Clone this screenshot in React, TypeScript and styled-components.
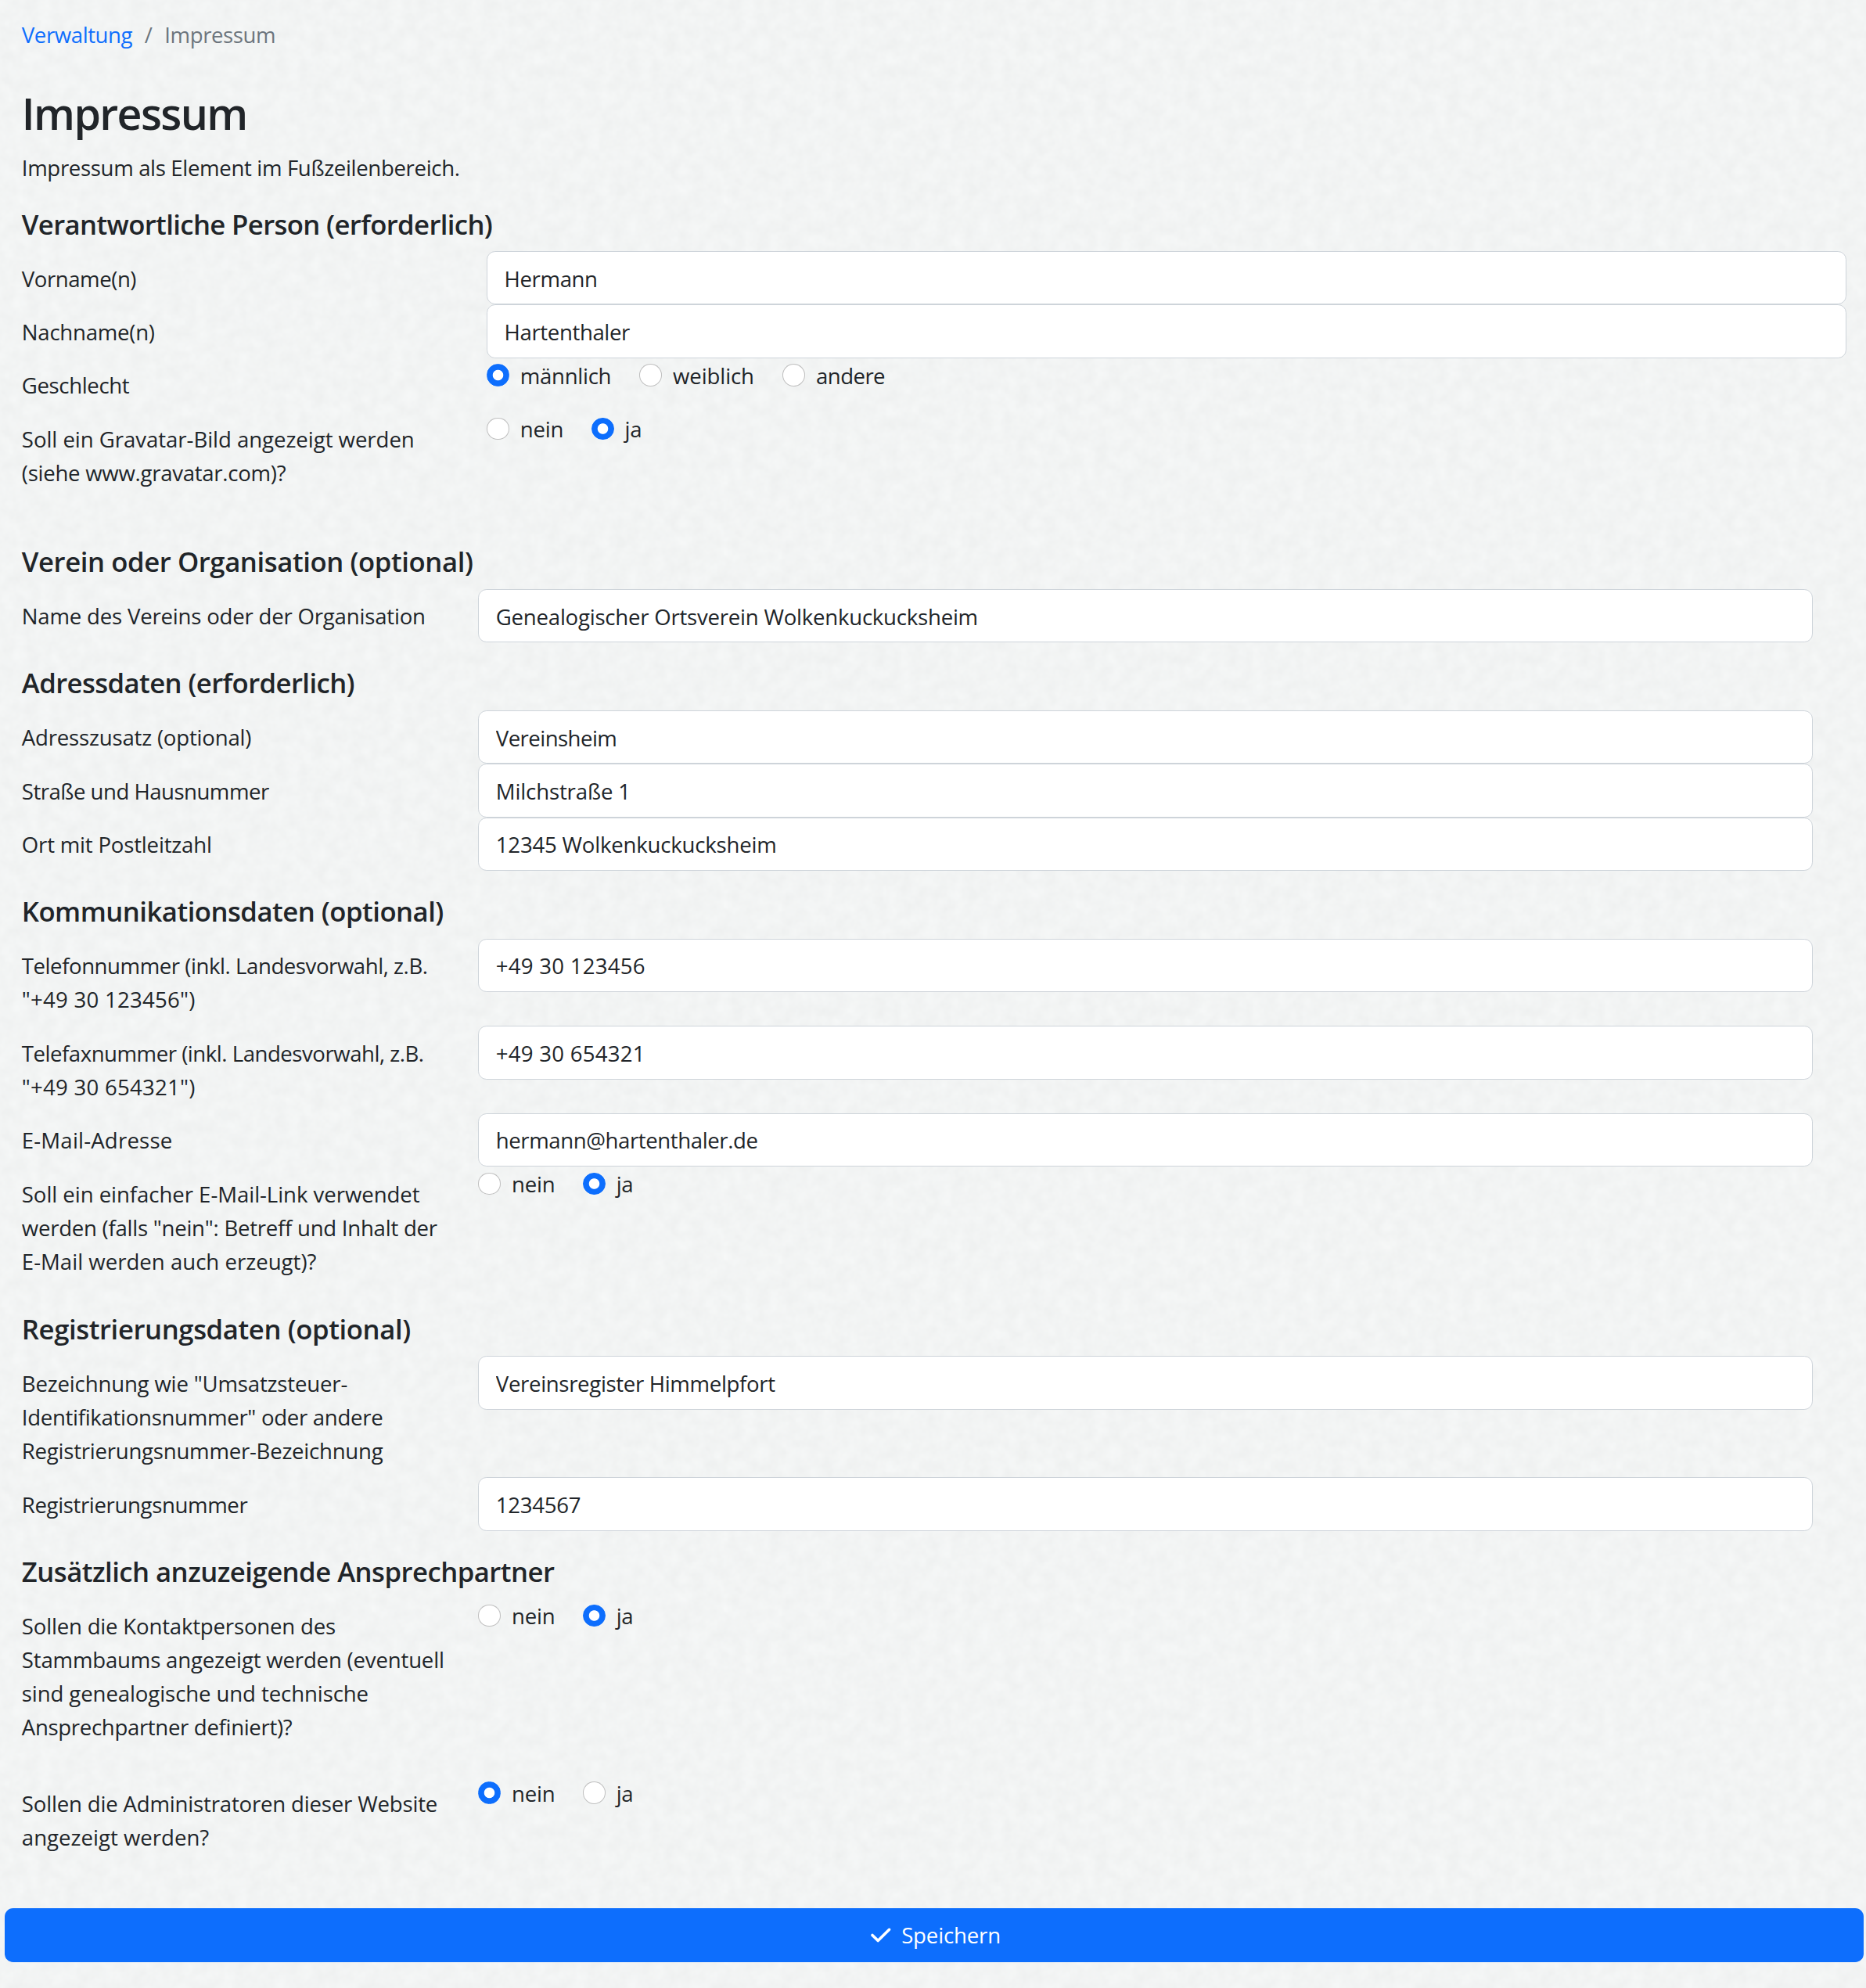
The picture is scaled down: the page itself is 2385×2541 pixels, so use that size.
import React from 'react';
import styled, { createGlobalStyle } from 'styled-components';
import { FaCheck } from 'react-icons/fa6';

const paper =
  "data:image/svg+xml,%3Csvg xmlns='http://www.w3.org/2000/svg' width='450' height='450'%3E%3Cfilter id='n' x='0' y='0' width='100%25' height='100%25' color-interpolation-filters='sRGB'%3E%3CfeTurbulence type='fractalNoise' baseFrequency='.06' numOctaves='3' seed='4' stitchTiles='stitch'/%3E%3CfeColorMatrix values='.038 0 0 0 .93 .038 0 0 0 .937 .038 0 0 0 .936 0 0 0 0 1'/%3E%3C/filter%3E%3Crect width='450' height='450' filter='url(%23n)'/%3E%3C/svg%3E";

const GlobalStyle = createGlobalStyle`
  *, *::before, *::after { box-sizing: border-box; }
  body {
    margin: 0;
    color: #212529;
    background: #f2f4f4 url("${paper}");
    font-family: "Open Sans", "Noto Sans", sans-serif;
    font-size: 27.6px;
    line-height: 43.2px;
  }
`;

const Page = styled.main`
  min-height: 2541px;
  padding: 23px 3px 0 6px;
`;

const Content = styled.div`
  padding-left: 21.8px;
`;

const Spaced = styled.span<{ $ls?: number }>`
  letter-spacing: ${(p) => p.$ls ?? 0}px;
  white-space: nowrap;
`;

const Breadcrumb = styled.nav`
  display: flex;
  height: 85px;
  color: #6c757d;
`;

const Crumb = styled.a`
  color: #0d6efd;
  text-decoration: none;
`;

const Divider = styled.span`
  padding: 0 15.4px 0 15.6px;
`;

const Title = styled.h1`
  margin: 0;
  padding-top: 2px;
  height: 84px;
  font-size: 55.5px;
  font-weight: 600;
  line-height: 69.1px;
`;

const Intro = styled.p`
  margin: 0;
  padding-top: 1px;
  height: 71.5px;
`;

const Section = styled.section<{ $label: number; $right: number; $after: number }>`
  display: grid;
  grid-template-columns: ${(p) => p.$label}px 1fr;
  margin: 0 ${(p) => p.$right}px ${(p) => p.$after}px 0;
`;

const Heading = styled.h5`
  grid-column: 1 / -1;
  height: 57.6px;
  margin: 0;
  padding-top: 1px;
  font-size: 34.7px;
  font-weight: 600;
  line-height: 43.2px;
`;

const Label = styled.label<{ $gap?: number }>`
  display: flex;
  flex-direction: column;
  padding: 13.6px 0 11.6px;
  margin-bottom: ${(p) => p.$gap ?? 0}px;
`;

const TextInput = styled.input<{ $ls: number }>`
  width: 100%;
  height: 68.4px;
  padding: 1px 21.6px 0;
  border: 1px solid #ced4da;
  border-radius: 10.8px;
  background: #fff;
  color: #212529;
  font: inherit;
  letter-spacing: ${(p) => p.$ls}px;
  outline: none;
`;

const Options = styled.div`
  display: flex;
  height: 43.2px;
`;

const Option = styled.label<{ $width: number }>`
  display: flex;
  width: ${(p) => p.$width}px;
  gap: 14px;
  padding-top: 1px;
`;

const Radio = styled.input`
  appearance: none;
  flex: none;
  width: 28.8px;
  height: 28.8px;
  margin: 6.4px 0 0;
  border: 1px solid rgba(0, 0, 0, 0.25);
  border-radius: 50%;
  background: #fff;
  &:checked {
    border-color: #0d6efd;
    background: radial-gradient(circle, #fff 6.3px, #0d6efd 7.2px);
  }
`;

const SaveButton = styled.button`
  display: flex;
  align-items: center;
  justify-content: center;
  gap: 13.5px;
  width: 100%;
  height: 69px;
  padding: 1px 0 0 4px;
  border: 0;
  border-radius: 10.8px;
  background: #0d6efd;
  color: #fff;
  font: inherit;
  svg {
    width: 25.6px;
    height: 28.8px;
  }
`;

type Line = [text: string, ls: number];
type Choice = [text: string, ls: number, width: number];

interface Row {
  label: Line[];
  value?: Line;
  choices?: Choice[];
  checked?: number;
  gap?: number;
}

interface Group {
  title: Line;
  label: number;
  right: number;
  after: number;
  rows: Row[];
}

const yesNo: Choice[] = [
  ['nein', -0.2, 133.8],
  ['ja', -0.4, 80],
];

const groups: Group[] = [
  {
    title: ['Verantwortliche Person (erforderlich)', -0.62],
    label: 594.2,
    right: 22,
    after: 57.4,
    rows: [
      { label: [['Vorname(n)', -0.46]], value: ['Hermann', -0.4] },
      { label: [['Nachname(n)', -0.26]], value: ['Hartenthaler', -0.39] },
      {
        label: [['Geschlecht', -0.38]],
        choices: [
          ['männlich', -0.3, 195.3],
          ['weiblich', -0.12, 183],
          ['andere', -0.58, 150],
        ],
        checked: 0,
      },
      {
        label: [
          ['Soll ein Gravatar-Bild angezeigt werden', -0.05],
          ['(siehe www.gravatar.com)?', -0.28],
        ],
        choices: yesNo,
        checked: 1,
      },
    ],
  },
  {
    title: ['Verein oder Organisation (optional)', -0.41],
    label: 583.4,
    right: 65.5,
    after: 29,
    rows: [
      {
        label: [['Name des Vereins oder der Organisation', -0.21]],
        value: ['Genealogischer Ortsverein Wolkenkuckucksheim', -0.24],
      },
    ],
  },
  {
    title: ['Adressdaten (erforderlich)', -0.59],
    label: 583.4,
    right: 65.5,
    after: 29,
    rows: [
      { label: [['Adresszusatz (optional)', -0.2]], value: ['Vereinsheim', -0.56] },
      { label: [['Straße und Hausnummer', -0.52]], value: ['Milchstraße 1', -0.15] },
      { label: [['Ort mit Postleitzahl', -0.2]], value: ['12345 Wolkenkuckucksheim', -0.21] },
    ],
  },
  {
    title: ['Kommunikationsdaten (optional)', -0.51],
    label: 583.4,
    right: 65.5,
    after: 29.8,
    rows: [
      {
        label: [
          ['Telefonnummer (inkl. Landesvorwahl, z.B.', -0.45],
          ['"+49 30 123456")', 0.24],
        ],
        value: ['+49 30 123456', 0.24],
      },
      {
        label: [
          ['Telefaxnummer (inkl. Landesvorwahl, z.B.', -0.48],
          ['"+49 30 654321")', 0.24],
        ],
        value: ['+49 30 654321', 0.24],
      },
      { label: [['E-Mail-Adresse', 0.18]], value: ['hermann@hartenthaler.de', -0.42] },
      {
        label: [
          ['Soll ein einfacher E-Mail-Link verwendet', -0.06],
          ['werden (falls "nein": Betreff und Inhalt der', -0.26],
          ['E-Mail werden auch erzeugt)?', 0],
        ],
        choices: yesNo,
        checked: 1,
      },
    ],
  },
  {
    title: ['Registrierungsdaten (optional)', -0.4],
    label: 583.4,
    right: 65.5,
    after: 29,
    rows: [
      {
        label: [
          ['Bezeichnung wie "Umsatzsteuer-', -0.18],
          ['Identifikationsnummer" oder andere', -0.31],
          ['Registrierungsnummer-Bezeichnung', -0.25],
        ],
        value: ['Vereinsregister Himmelpfort', -0.34],
      },
      { label: [['Registrierungsnummer', -0.38]], value: ['1234567', -0.28] },
    ],
  },
  {
    title: ['Zusätzlich anzuzeigende Ansprechpartner', -0.52],
    label: 583.4,
    right: 65.5,
    after: 57.2,
    rows: [
      {
        label: [
          ['Sollen die Kontaktpersonen des', -0.2],
          ['Stammbaums angezeigt werden (eventuell', -0.19],
          ['sind genealogische und technische', -0.11],
          ['Ansprechpartner definiert)?', -0.34],
        ],
        choices: yesNo,
        checked: 1,
        gap: 28.8,
      },
      {
        label: [
          ['Sollen die Administratoren dieser Website', -0.19],
          ['angezeigt werden?', 0],
        ],
        choices: yesNo,
        checked: 0,
      },
    ],
  },
];

function Field({ row, name }: { row: Row; name: string }) {
  return (
    <>
      <Label $gap={row.gap}>
        {row.label.map(([text, ls]) => (
          <Spaced key={text} $ls={ls}>
            {text}
          </Spaced>
        ))}
      </Label>
      {row.value && <TextInput type="text" defaultValue={row.value[0]} $ls={row.value[1]} />}
      {row.choices && (
        <Options>
          {row.choices.map(([text, ls, width], i) => (
            <Option key={text} $width={width}>
              <Radio type="radio" name={name} defaultChecked={i === row.checked} />
              <Spaced $ls={ls}>{text}</Spaced>
            </Option>
          ))}
        </Options>
      )}
    </>
  );
}

export default function App() {
  return (
    <Page>
      <GlobalStyle />
      <Content>
        <Breadcrumb>
          <Crumb>
            <Spaced $ls={-0.42}>Verwaltung</Spaced>
          </Crumb>
          <Divider>/</Divider>
          <Spaced $ls={-0.43}>Impressum</Spaced>
        </Breadcrumb>
        <Title>
          <Spaced $ls={-1.65}>Impressum</Spaced>
        </Title>
        <Intro>
          <Spaced $ls={-0.35}>Impressum als Element im Fußzeilenbereich.</Spaced>
        </Intro>
        {groups.map((g, gi) => (
          <Section key={g.title[0]} $label={g.label} $right={g.right} $after={g.after}>
            <Heading>
              <Spaced $ls={g.title[1]}>{g.title[0]}</Spaced>
            </Heading>
            {g.rows.map((row, ri) => (
              <Field key={row.label[0][0]} row={row} name={`field-${gi}-${ri}`} />
            ))}
          </Section>
        ))}
      </Content>
      <SaveButton type="button">
        <FaCheck />
        <Spaced $ls={-0.17}>Speichern</Spaced>
      </SaveButton>
    </Page>
  );
}
